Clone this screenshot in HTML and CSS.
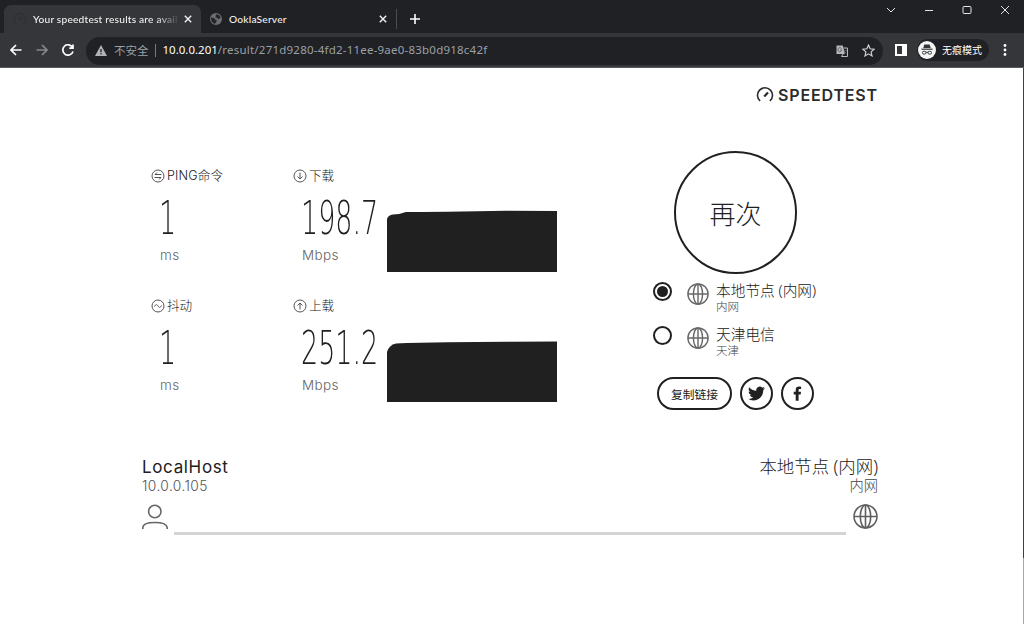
FILE: index.html
```
<!DOCTYPE html>
<html lang="zh-CN">
<head>
<meta charset="utf-8">
<title>Your speedtest results are available</title>
<link rel="stylesheet" href="styles.css">
</head>
<body>
<svg width="0" height="0" class="defs">
  <symbol id="globe" viewBox="0 0 24 24"><g fill="none" stroke="currentColor" stroke-width="1.55"><circle cx="12" cy="12" r="11"/><ellipse cx="12" cy="12" rx="5" ry="11"/><path d="M1 12h22M12 1v22"/></g></symbol>
  <symbol id="close" viewBox="0 0 8 8"><path d="M.8.8l6.4 6.4M7.2.8L.8 7.2" stroke="currentColor" stroke-width="1.4"/></symbol>
</svg>
<header class="browser">
  <div class="tabs">
    <div class="tab active">
      <svg class="favicon" viewBox="0 0 14 14" fill="none" stroke="#2e2f33" stroke-width="1.3"><path d="M3 12a6 6 0 1 1 8 0M6.5 8.5L9 5"/></svg>
      <span class="tab-title fade">Your speedtest results are avail</span>
      <svg class="x"><use href="#close"/></svg>
    </div>
    <div class="tab second">
      <svg class="favicon" viewBox="0 0 12 12"><circle cx="6" cy="6" r="6" fill="#6b6e72"/><path d="M1 4.5l3 .4 1 1.7 1.8.6-.6 2-1.4 1.6C2.300 10.500 1 8 1 4.500zM6 1.200l3.200.9 1.500 2.600-2.500 1.500-1-1.500-1.700-.2z" fill="#242528"/></svg>
      <span class="tab-title">OoklaServer</span>
      <svg class="x"><use href="#close"/></svg>
    </div>
    <svg class="plus" viewBox="0 0 10 10"><path d="M5 0v10M0 5h10" stroke="#fff" stroke-width="1.6"/></svg>
    <div class="window-buttons">
      <svg width="10" height="10" viewBox="0 0 10 10"><path d="M1 3l4 4 4-4"/></svg>
      <svg width="10" height="10" viewBox="0 0 10 10"><path d="M1 5.500h8"/></svg>
      <svg width="10" height="10" viewBox="0 0 10 10"><rect x="1" y="1.500" width="8" height="7" rx="1"/></svg>
      <svg width="10" height="10" viewBox="0 0 10 10"><path d="M1 1l8 8M9 1L1 9"/></svg>
    </div>
  </div>
  <div class="toolbar">
    <svg class="nav" viewBox="0 0 12 12" stroke="#fff"><path d="M11.500 6H1M6 1L1 6l5 5"/></svg>
    <svg class="nav" viewBox="0 0 12 12" stroke="#85878b"><path d="M.5 6H11M6 1l5 5-5 5"/></svg>
    <svg class="nav" viewBox="0 0 12 12" stroke="#fff"><path d="M10.500 3.300A5.200 5.200 0 1 0 11 7.500M11 .5v3.700H7.300"/></svg>
    <div class="address">
      <svg class="warn" viewBox="0 0 12 11"><path d="M6 0l6 11H0z" fill="#b0b3b7"/><path d="M6 4v3.200M6 8.200v1.300" stroke="#202124" stroke-width="1.300"/></svg>
      <span class="unsafe">不安全</span><i class="sep"></i>
      <span class="url"><b>10.0.0.201</b>/result/271d9280-4fd2-11ee-9ae0-83b0d918c42f</span>
      <svg class="translate" viewBox="0 0 12 12"><path d="M.5.500h6.300L9 9H.500z" fill="#b6b8bb"/><path d="M7.500 3h4v8.500H5.500L7 9" fill="none" stroke="#b6b8bb"/><path d="M5.500 3.600A2 2 0 1 0 5.800 5H4M8 5.500h3M9.500 4.500v1M10.500 5.500C10 7.500 9 8 8.300 8.500M8.500 6.500l2 2.500" fill="none" stroke="#54565a" stroke-width=".8"/></svg>
      <svg class="star" viewBox="0 0 12 12"><path d="M6 1l1.500 3.400 3.700.4-2.800 2.500.8 3.700L6 9.100 2.800 11l.8-3.700L.8 4.800l3.700-.4z" fill="none" stroke="#d0d2d4" stroke-width="1.100"/></svg>
    </div>
    <svg class="panel" viewBox="0 0 12 12"><path d="M0 0h12v12H0zM2 2v8h5V2z" fill="#fff" fill-rule="evenodd"/></svg>
    <div class="profile">
      <svg viewBox="0 0 18 18"><circle cx="9" cy="9" r="9" fill="#f4f4f5"/><path d="M6.300 3.500h5.400l1 3.500H5.300z" fill="#35363a"/><path d="M3.500 8.200h11" stroke="#35363a" stroke-width="1.200"/><g fill="none" stroke="#35363a"><rect x="4.500" y="10.300" width="3.500" height="2.800" rx="1.300"/><rect x="10" y="10.300" width="3.500" height="2.800" rx="1.300"/><path d="M8 11.300h2"/></g></svg>
      <span>无痕模式</span>
    </div>
    <svg class="dots" viewBox="0 0 4 12" fill="#fff"><circle cx="2" cy="1.500" r="1.400"/><circle cx="2" cy="6" r="1.400"/><circle cx="2" cy="10.500" r="1.400"/></svg>
  </div>
</header>
<div class="page">
  <div class="content">
    <div class="brand">
      <svg viewBox="0 0 18 16" fill="none" stroke="#2b2b2b" stroke-width="1.600"><path d="M4.100 14A7.500 7.500 0 1 1 13.900 14"/><path d="M8.200 9.500L12 5.400" stroke-width="2.200"/></svg>
      <span>SPEEDTEST</span>
    </div>
    <main class="results">
      <section class="metrics">
        <div class="metric">
          <div class="label"><svg viewBox="0 0 14 14"><circle cx="7" cy="7" r="6"/><path d="M10.500 5.500H4l2-2M3.500 8.500H10l-2 2"/></svg><span class="ping">PING命令</span></div>
          <div class="value">1</div><div class="unit">ms</div>
        </div>
        <div class="metric">
          <div class="label"><svg viewBox="0 0 14 14"><circle cx="7" cy="7" r="6"/><path d="M7 3.500v6.500M4.500 7.500L7 10l2.500-2.500"/></svg><span>下载</span></div>
          <div class="value">198.7</div><div class="unit">Mbps</div>
        </div>
        <svg class="chart" viewBox="0 0 170 62"><path d="M0 62V9Q1 5 6 4.500L12 4 19 2H35L60 1.700 75 1.500 120 .800 170 1V62z" fill="#202020"/></svg>
        <div class="metric">
          <div class="label"><svg viewBox="0 0 14 14"><circle cx="7" cy="7" r="6"/><path d="M3.500 7.500C5 4.500 6 5.500 7 7s2 2.500 3.500-.5"/></svg><span>抖动</span></div>
          <div class="value">1</div><div class="unit">ms</div>
        </div>
        <div class="metric">
          <div class="label"><svg viewBox="0 0 14 14"><circle cx="7" cy="7" r="6"/><path d="M7 10.500V4M4.500 6.500L7 4l2.500 2.500"/></svg><span>上载</span></div>
          <div class="value">251.2</div><div class="unit">Mbps</div>
        </div>
        <svg class="chart" viewBox="0 0 170 62"><path d="M0 62V12Q2 5 9 3.500L20 3 60 2.200 120 1.800 170 1.500V62z" fill="#202020"/></svg>
      </section>
      <aside class="controls">
        <div class="again">再次</div>
        <div class="server"><i class="radio on"></i><svg class="globe"><use href="#globe"/></svg><div><p class="name">本地节点 (内网)</p><p class="place">内网</p></div></div>
        <div class="server"><i class="radio"></i><svg class="globe"><use href="#globe"/></svg><div><p class="name">天津电信</p><p class="place">天津</p></div></div>
        <div class="share">
          <div class="copy">复制链接</div>
          <div class="round"><svg viewBox="0 0 24 24" width="17" height="17"><path fill="#202020" d="M23.950 4.570a10 10 0 0 1-2.820.77 4.960 4.960 0 0 0 2.160-2.720c-.95.55-2 .95-3.130 1.180a4.920 4.920 0 0 0-8.380 4.480C7.690 8.100 4.070 6.130 1.640 3.160a4.820 4.820 0 0 0-.67 2.480c0 1.710.87 3.210 2.190 4.100a4.900 4.900 0 0 1-2.230-.62v.06a4.920 4.920 0 0 0 3.950 4.830 5 5 0 0 1-2.210.08 4.940 4.940 0 0 0 4.600 3.420A9.870 9.870 0 0 1 0 19.540a14 14 0 0 0 7.550 2.210c9.050 0 14-7.500 14-13.990 0-.21 0-.42-.02-.63a9.940 9.940 0 0 0 2.420-2.560z"/></svg></div>
          <div class="round"><svg viewBox="0 0 10 16" width="9" height="15"><path fill="#202020" d="M3 16V9H.800V6H3V4C3 1.500 4.500.300 6.700.300L9 .400V3H7.500C6.500 3 6.200 3.500 6.200 4.300V6h2.700l-.4 3H6.200v7z"/></svg></div>
        </div>
      </aside>
    </main>
    <footer class="route">
      <div class="ends"><div><p class="host">LocalHost</p><p class="ip">10.0.0.105</p></div><div class="remote"><p class="node">本地节点 (内网)</p><p class="where">内网</p></div></div>
      <div class="link">
        <svg class="person" viewBox="0 0 26 26" fill="none" stroke="#666" stroke-width="1.600"><circle cx="12.800" cy="7.500" r="6.200"/><path d="M.8 25v-1.500Q1 18.500 12.800 18.500T25.200 23.500V25"/></svg>
        <i class="line"></i>
        <svg class="end-globe"><use href="#globe"/></svg>
      </div>
    </footer>
  </div>
  <div class="edge"></div>
</div>
</body>
</html>
```
FILE: styles.css
```
* { box-sizing: border-box; }
body { margin: 0; width: 1024px; height: 624px; overflow: hidden; background: #fff; color: #202020; font-family: "Noto Sans", "Noto Sans CJK SC", sans-serif; }
p { margin: 0; white-space: nowrap; }
svg { display: block; flex: none; }
.defs { position: absolute; }
.browser { height: 68px; background: #35363a; border-bottom: 1px solid #5a5b5e; }
.tabs { height: 33px; background: #202124; display: flex; padding-left: 4px; }
.tab { display: flex; align-items: center; height: 28px; margin-top: 5px; color: #f1f1f1; }
.tab.active { width: 197px; background: #35363a; border-radius: 7px 7px 0 0; padding: 0 9px 0 9px; }
.tab.second { width: 196px; height: 20px; margin-top: 9px; padding: 0 9px 0 9px; border-right: 1px solid #4c4d50; }
.favicon { width: 12px; height: 12px; margin-right: 7px; }
.active .favicon { width: 14px; height: 14px; margin-right: 6px; }
.tab-title { flex: 1; min-width: 0; overflow: hidden; white-space: nowrap; font: 500 10.2px/16px Lato, sans-serif; letter-spacing: .2px; }
.fade { -webkit-mask-image: linear-gradient(90deg, #000 84%, transparent); mask-image: linear-gradient(90deg, #000 84%, transparent); }
.x { width: 8px; height: 8px; color: #f1f1f1; margin-left: 4px; }
.plus { width: 10px; height: 10px; margin: 14px 0 0 13px; }
.window-buttons { margin-left: auto; display: flex; gap: 28px; padding: 5px 14px 0 0; fill: none; stroke: #e4e4e4; }
.toolbar { height: 34px; display: flex; align-items: center; padding-left: 10px; }
.nav { width: 12px; height: 12px; margin-right: 14px; fill: none; stroke-width: 1.7; }
.address { width: 797px; height: 28px; margin-top: 1px; border-radius: 14px; background: #202124; display: flex; align-items: center; padding: 0 8px 0 9px; margin-left: -2px; color: #9aa0a6; }
.warn { width: 12px; height: 11px; }
.unsafe { font-size: 11.5px; margin-left: 7px; line-height: 16px; }
.sep { width: 1px; height: 13px; background: #77797c; margin: 0 7px 0 6px; }
.url { font: 11.5px/16px "Noto Sans", sans-serif; letter-spacing: .22px; white-space: nowrap; width: 340px; margin-top: -2px; }
.url b { font-weight: 400; color: #fff; letter-spacing: 0; }
.translate { width: 12px; height: 12px; margin-left: auto; }
.star { width: 13px; height: 13px; margin-left: 14px; }
.panel { width: 12px; height: 12px; margin-left: 12px; }
.profile { margin-left: 10px; width: 72px; height: 22px; border-radius: 11px; background: #202124; display: flex; align-items: center; padding-left: 1px; color: #fff; font-size: 10px; line-height: 16px; white-space: nowrap; }
.profile svg { width: 18px; height: 18px; margin-right: 6px; }
.dots { width: 4px; height: 12px; margin-left: 14px; }
.page { height: 556px; display: flex; justify-content: space-between; }
.content { padding-left: 142px; width: 879px; }
.edge { width: 1px; height: 556px; background: linear-gradient(#35424a 490px, #a8a8a8 490px); }
.brand { height: 83px; padding-top: 17px; display: flex; justify-content: flex-end; font: 600 16px/20px Inter, sans-serif; color: #2b2b2b; }
.brand svg { width: 18px; height: 16px; margin: 2px 4px 0 0; }
.brand span { width: 101px; white-space: nowrap; letter-spacing: .85px; }
.results { height: 306px; display: flex; }
.metrics { width: 506px; padding: 16px 0 0 9px; display: grid; grid-template-columns: 142px 94px 170px; grid-template-rows: 130px 130px; align-content: start; }
.label { height: 18px; display: flex; align-items: center; font: 300 12.6px/18px Inter, "Noto Sans CJK SC", sans-serif; white-space: nowrap; }
.ping { letter-spacing: .15px; }
.label svg { width: 14px; height: 14px; margin: 0 2px 0 0; fill: none; stroke: #555; stroke-width: 1; }
.value { height: 61px; margin-left: 8px; font: 200 46.5px/66px "DejaVu Sans Light", "DejaVu Sans", sans-serif; transform: scaleX(.58); transform-origin: left; white-space: nowrap; }
.unit { margin-left: 9px; font: 300 13.5px/18px Inter, sans-serif; letter-spacing: .4px; color: #666; }
.chart { width: 170px; height: 62px; margin-top: 43px; }
.controls { flex: 1; padding-left: 5px; }
.again { width: 123px; height: 123px; margin-left: 21px; border: 2px solid #202020; border-radius: 50%; display: flex; align-items: center; justify-content: center; font: 300 26px/30px "Noto Sans CJK SC", sans-serif; }
.server { height: 44px; display: flex; padding-top: 8px; }
.radio { width: 19px; height: 19px; border: 2px solid #202020; border-radius: 50%; flex: none; display: flex; align-items: center; justify-content: center; }
.radio.on::before { content: ""; width: 11px; height: 11px; border-radius: 50%; background: #202020; }
.globe { width: 22px; height: 22px; margin: 1px 7px 0 15px; color: #686868; }
.name { font: 300 14.7px/18px "Noto Sans", "Noto Sans CJK SC", sans-serif; margin-top: -1px; }
.place { font: 300 11.5px/14px "Noto Sans CJK SC", sans-serif; color: #444; }
.share { margin: 15px 0 0 4px; display: flex; gap: 8px; }
.copy, .round { height: 33px; border: 2px solid #202020; border-radius: 17px; display: flex; align-items: center; justify-content: center; }
.copy { width: 75px; font: 400 11.8px/18px "Noto Sans CJK SC", sans-serif; white-space: nowrap; }
.round { width: 33px; }
.ends { display: flex; justify-content: space-between; height: 46px; padding-right: 1px; }
.host { font: 400 17px/22px Inter, sans-serif; letter-spacing: .65px; margin-top: -1px; }
.ip { font: 300 13.8px/16px Inter, sans-serif; letter-spacing: .4px; color: #555; }
.remote { text-align: right; }
.node { font: 300 17.4px/22px "Noto Sans", "Noto Sans CJK SC", sans-serif; margin-top: -2px; }
.where { font: 300 14.3px/16px "Noto Sans CJK SC", sans-serif; color: #444; }
.link { display: flex; height: 32px; }
.person { width: 26px; height: 26px; margin-top: 1px; }
.line { width: 672px; height: 3px; background: #d3d3d3; margin: 29px 7px 0 6px; }
.end-globe { width: 25px; height: 25px; margin-top: 1px; color: #606060; }
```
